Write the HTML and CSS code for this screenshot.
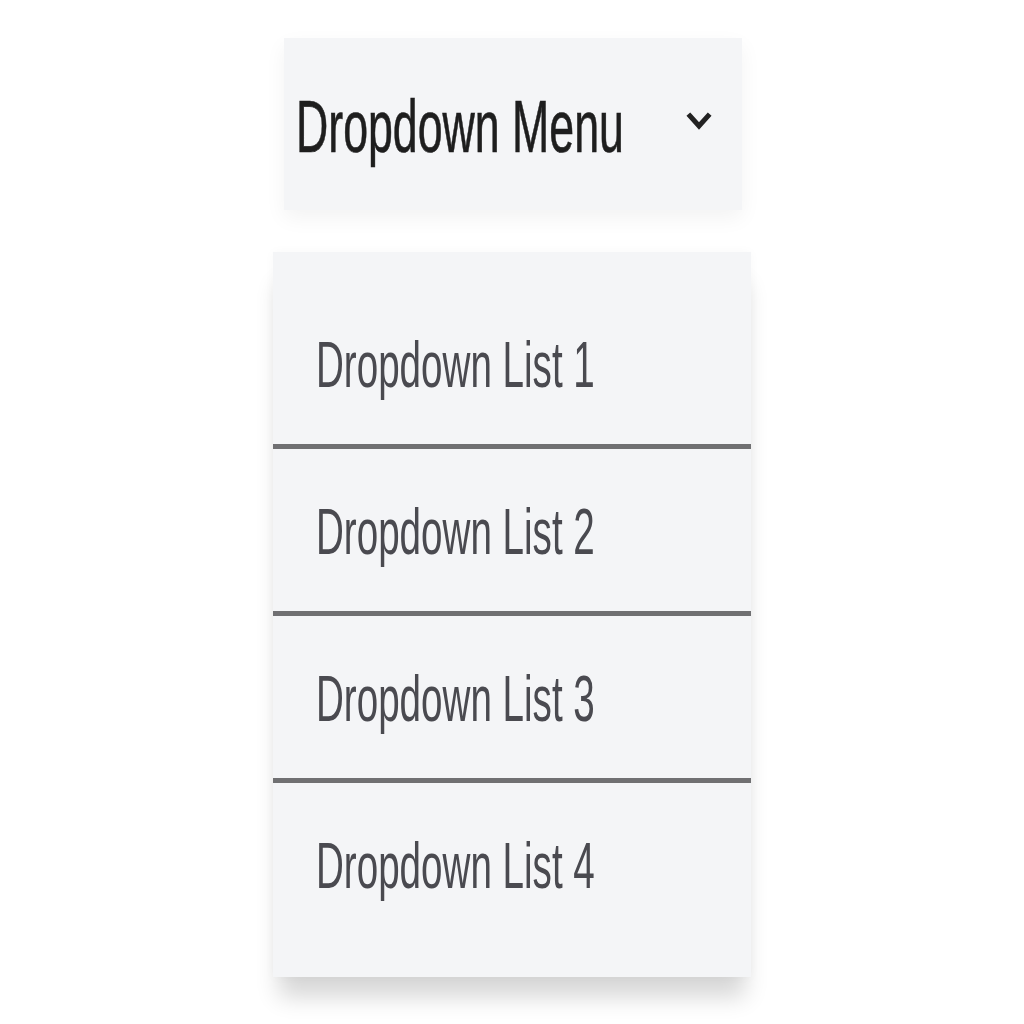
FILE: index.html
```html
<!DOCTYPE html>
<html lang="en">
<head>
<meta charset="utf-8">
<title>Dropdown Menu</title>
<link rel="stylesheet" href="styles.css">
</head>
<body>
<div class="page">
  <button class="dropdown-toggle" type="button">
    <span class="label toggle-label">Dropdown Menu</span>
    <svg class="chevron" width="26" height="20" viewBox="0 0 26 20" aria-hidden="true">
      <path d="M4 5 L13 15 L22 5" fill="none" stroke="#222" stroke-width="5" stroke-linecap="square" stroke-linejoin="miter"/>
    </svg>
  </button>
  <ul class="dropdown-list">
    <li class="item"><span class="label item-label">Dropdown List 1</span></li>
    <li class="item"><span class="label item-label">Dropdown List 2</span></li>
    <li class="item"><span class="label item-label">Dropdown List 3</span></li>
    <li class="item"><span class="label item-label">Dropdown List 4</span></li>
  </ul>
</div>
</body>
</html>
```

FILE: styles.css
```css
html, body {
  margin: 0;
  padding: 0;
  background: #ffffff;
}

body {
  font-family: "Liberation Sans", Arial, sans-serif;
  min-height: 1024px;
}

.page {
  display: flex;
  flex-direction: column;
  align-items: center;
  padding-top: 38px;
  gap: 42px;
}

.dropdown-toggle {
  width: 458px;
  height: 172px;
  margin-left: 2px;
  border: none;
  background: #f4f5f7;
  display: flex;
  align-items: center;
  justify-content: space-between;
  padding: 0 30px 0 12px;
  box-sizing: border-box;
  box-shadow: 0 8px 20px rgba(0, 0, 0, 0.05);
  font-family: inherit;
  cursor: pointer;
}

.label {
  display: inline-block;
  transform: scaleY(1.66);
  transform-origin: center;
  white-space: nowrap;
  letter-spacing: 0;
}

.toggle-label {
  font-size: 44.7px;
  color: #1e1e1e;
  margin-top: 6px;
  -webkit-text-stroke: 0.4px #1e1e1e;
}

.chevron {
  display: block;
  margin-top: -6px;
}

.dropdown-list {
  list-style: none;
  margin: 0;
  width: 478px;
  padding: 30px 0 32px;
  box-sizing: border-box;
  background: #f4f5f7;
  box-shadow: 0 26px 22px -6px rgba(0, 0, 0, 0.16), 0 0 10px rgba(0, 0, 0, 0.03);
}

.item {
  height: 162px;
  display: flex;
  align-items: center;
  padding-left: 43px;
}

.item + .item {
  border-top: 5px solid #707072;
}

.item-label {
  font-size: 38.6px;
  color: #4a4a50;
  margin-top: 4px;
}
```
